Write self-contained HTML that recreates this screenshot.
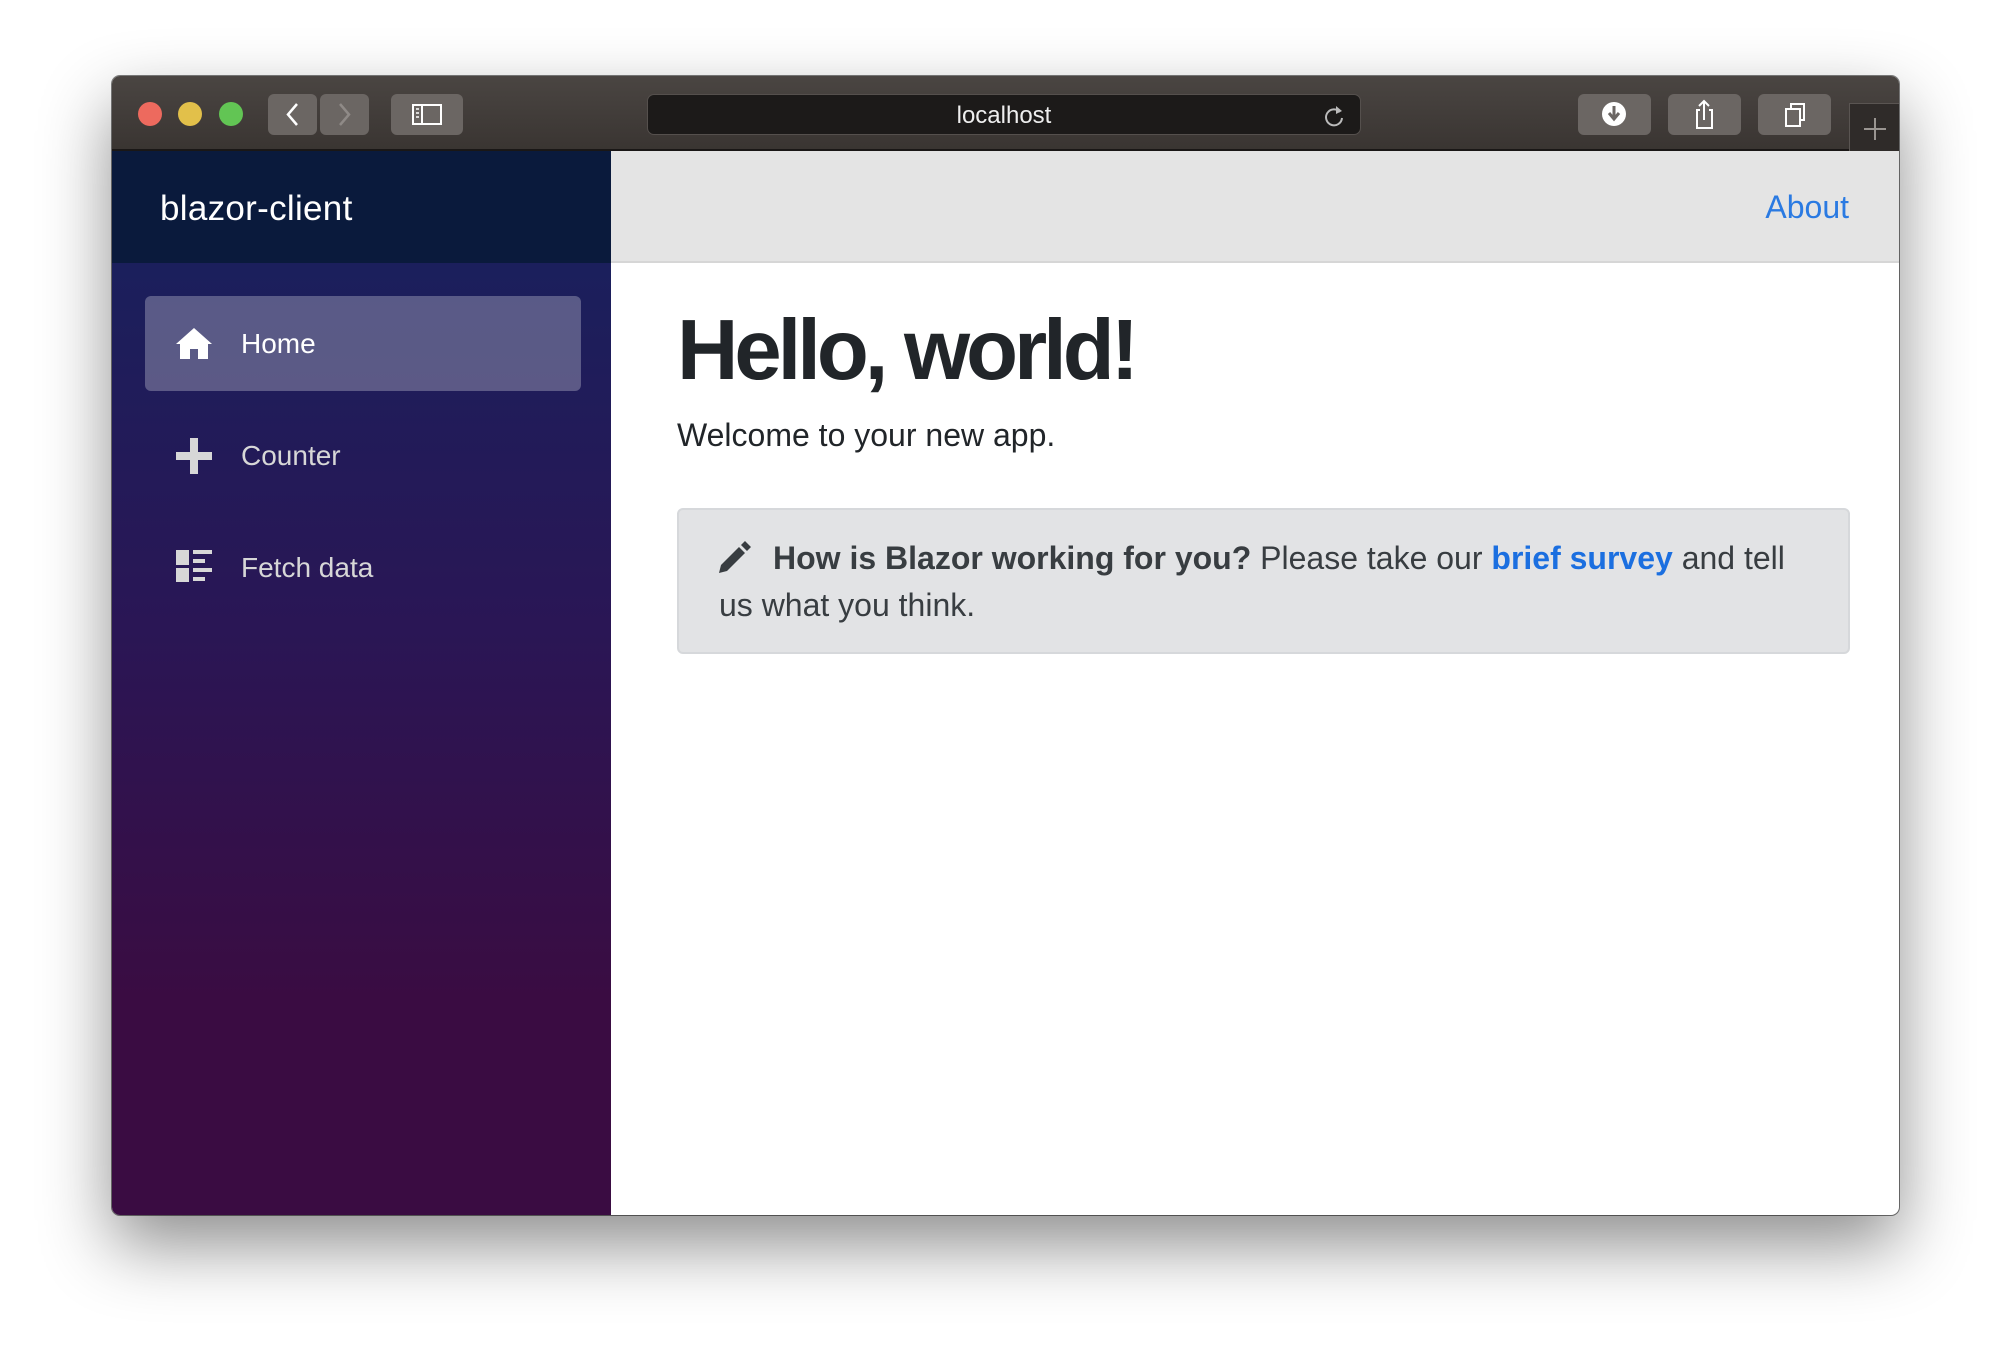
<!DOCTYPE html>
<html><head><meta charset="utf-8"><style>
*{box-sizing:border-box;margin:0;padding:0}
html,body{width:2010px;height:1364px;background:#fff;overflow:hidden;font-family:"Liberation Sans",Arial,sans-serif}
.win{position:absolute;left:112px;top:76px;width:1787px;height:1139px;border-radius:8px;overflow:hidden;box-shadow:0 30px 70px rgba(0,0,0,.45),0 0 0 1px rgba(0,0,0,.5);background:#fff}
.tb{position:absolute;left:0;top:0;width:100%;height:75px;background:linear-gradient(#4a4542,#3a3532);border-bottom:2px solid #1a1716}
.dot{position:absolute;top:90px;width:24px;height:24px;border-radius:50%}
.btn{position:absolute;top:18px;height:41px;background:#6b6663;border-radius:6px}
.url{position:absolute;left:535px;top:18px;width:714px;height:41px;background:#1c1a19;border:1px solid #55504d;border-radius:7px;color:#eee;font-size:24px;text-align:center;line-height:41px}
.side{position:absolute;left:0;top:75px;width:499px;height:1064px;background:linear-gradient(180deg,#16225e 0%,#2a1655 45%,#3a0c42 80%,#3a0c42 100%)}
.sh{height:112px;background:#0a1a3c;color:#fff;font-size:35px;padding-left:48px;line-height:116px;letter-spacing:0.3px}
.nav{position:absolute;left:33px;width:436px;height:95px;border-radius:6px;color:#d7d7d7;font-size:28px;line-height:95px;padding-left:96px}
.nav.act{background:rgba(255,255,255,.27);color:#fff}
.nav svg{position:absolute;left:31px;top:30px}
.top{position:absolute;left:499px;top:75px;right:0;height:112px;background:#e4e4e4;border-bottom:2px solid #d6d6d6}
.about{position:absolute;right:50px;top:38px;color:#2a7ae2;font-size:32px}
h1{position:absolute;left:565px;top:226px;font-size:85px;font-weight:700;color:#212529;letter-spacing:-4px}
.wel{position:absolute;left:565px;top:341px;font-size:32px;color:#212529}
.alert{position:absolute;left:565px;top:432px;width:1173px;height:146px;background:#e2e3e5;border:2px solid #d6d8db;border-radius:6px;color:#383d41;font-size:32px;line-height:47px;padding:25px 60px 0 40px}
.alert a{color:#1b6fe0;font-weight:700;text-decoration:none}
</style></head><body>
<div class="win">
 <div class="tb">
  <div class="dot" style="left:26px;top:26px;background:#ed6a5e"></div>
  <div class="dot" style="left:66px;top:26px;background:#e2c04a"></div>
  <div class="dot" style="left:107px;top:26px;background:#62c554"></div>
  <div class="btn" style="left:156px;width:49px"><svg width="49" height="41"><path d="M29 10 L20 20.5 L29 31" stroke="#fff" stroke-width="2.5" fill="none"/></svg></div>
  <div class="btn" style="left:208px;width:49px"><svg width="49" height="41"><path d="M20 10 L29 20.5 L20 31" stroke="#8f8a87" stroke-width="2.5" fill="none"/></svg></div>
  <div class="btn" style="left:279px;width:72px"><svg width="72" height="41"><rect x="22" y="11" width="28" height="19" stroke="#fff" stroke-width="2" fill="none"/><line x1="31" y1="11" x2="31" y2="30" stroke="#fff" stroke-width="2"/><path d="M25 15h3M25 19h3M25 23h3" stroke="#fff" stroke-width="1.5"/></svg></div>
  <div class="url">localhost<svg style="position:absolute;right:14px;top:8px" width="24" height="26"><path d="M18 9 A8 8 0 1 0 20 15" stroke="#bbb" stroke-width="2" fill="none"/><path d="M14 3 L20 8 L14 11Z" fill="#bbb"/></svg></div>
  <div class="btn" style="left:1466px;width:73px"><svg width="73" height="41"><circle cx="36" cy="20" r="12" fill="#fff"/><path d="M36 12v11M31 19l5 6 5-6" stroke="#6b6663" stroke-width="3" fill="none"/></svg></div>
  <div class="btn" style="left:1556px;width:73px"><svg width="73" height="41"><path d="M32 16h-3v18h15v-18h-3" stroke="#fff" stroke-width="2" fill="none"/><path d="M36 26V7M31 12l5-5 5 5" stroke="#fff" stroke-width="2" fill="none"/></svg></div>
  <div class="btn" style="left:1646px;width:73px"><svg width="73" height="41"><rect x="28" y="15" width="14" height="17" stroke="#fff" stroke-width="2" fill="none"/><path d="M33 15v-5h13v16h-4" stroke="#fff" stroke-width="2" fill="none"/></svg></div>
  <div style="position:absolute;left:1737px;top:27px;width:50px;height:48px;background:#2f2b29;border-left:1px solid #5a5552;border-top:1px solid #5a5552"><svg width="50" height="48"><path d="M25 14v22M14 25h22" stroke="#9a9591" stroke-width="2"/></svg></div>
 </div>
 <div class="side">
  <div class="sh">blazor-client</div>
  <div class="nav act" style="top:145px"><svg width="36" height="34"><path d="M18 2 L36 18 H32 V33 H22 V23 H14 V33 H4 V18 H0Z" fill="#fff"/></svg>Home</div>
  <div class="nav" style="top:257px"><svg width="36" height="36"><path d="M14 0h8v14h14v8H22v14h-8V22H0v-8h14z" fill="#d7d7d7"/></svg>Counter</div>
  <div class="nav" style="top:369px"><svg width="38" height="34"><rect x="0" y="0" width="13" height="15" fill="#d7d7d7"/><rect x="0" y="18" width="13" height="14" fill="#d7d7d7"/><rect x="17" y="0" width="19" height="4" fill="#d7d7d7"/><rect x="17" y="9" width="12" height="4" fill="#d7d7d7"/><rect x="17" y="18" width="19" height="4" fill="#d7d7d7"/><rect x="17" y="27" width="12" height="4" fill="#d7d7d7"/></svg>Fetch data</div>
 </div>
 <div class="top"><span class="about">About</span></div>
 <h1>Hello, world!</h1>
 <div class="wel">Welcome to your new app.</div>
 <div class="alert"><svg style="vertical-align:-4px;margin-right:22px" width="32" height="32"><path d="M0 32 L2 24 L20 6 L26 12 L8 30Z M22 4 L26 0 L32 6 L28 10Z" fill="#383d41"/></svg><b>How is Blazor working for you?</b> Please take our <a>brief survey</a> and tell us what you think.</div>
</div>
</body></html>
